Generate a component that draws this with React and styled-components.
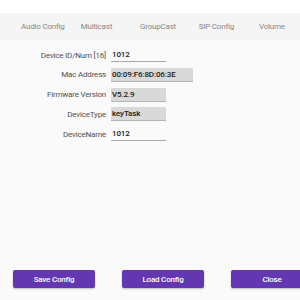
import React from "react";
import styled, { createGlobalStyle } from "styled-components";

const Global = createGlobalStyle`
  html, body { margin: 0; padding: 0; background: #fafafa; overflow: hidden; }
  body { font-family: Roboto, "Liberation Sans", sans-serif; }
`;

const Page = styled.div`
  width: 330px;
  height: 300px;
  display: flex;
  flex-direction: column;
  background: #fafafa;
`;

const TopSpace = styled.div`
  height: 13px;
  background: #ffffff;
`;

const TabBar = styled.div`
  height: 27px;
  background: #f5f5f5;
  display: flex;
  align-items: center;
  padding-left: 21px;
`;

const Tab = styled.div`
  font-size: 8px;
  letter-spacing: -0.2px;
  color: #878787;
  width: ${(p) => p.$w}px;
  white-space: nowrap;
`;

const Form = styled.div`
  display: flex;
  flex-direction: column;
  padding-top: 8px;
  gap: 5.75px;
`;

const Row = styled.div`
  display: grid;
  grid-template-columns: 111px auto;
  align-items: center;
  height: 14px;
`;

const Label = styled.div`
  font-size: 8px;
  letter-spacing: -0.2px;
  color: #505050;
  text-align: right;
  padding-right: 5px;
  white-space: nowrap;
`;

const Field = styled.div`
  width: ${(p) => p.$w}px;
  height: 14px;
  box-sizing: border-box;
  font-size: 8px;
  letter-spacing: -0.12px;
  color: #1a1a1a;
  font-weight: 500;
  padding-left: 1px;
  display: flex;
  align-items: center;
  background: ${(p) => (p.$filled ? "#d9d9d9" : "transparent")};
  border-bottom: 1px solid ${(p) => (p.$filled ? "#b5b5b5" : "#a8a8a8")};
  white-space: nowrap;
`;

const Spacer = styled.div`
  flex: 1;
`;

const ButtonBar = styled.div`
  display: flex;
  gap: 27px;
  padding-left: 13px;
  margin-bottom: 12px;
`;

const Button = styled.button`
  width: 82px;
  height: 18px;
  border: none;
  border-radius: 2px;
  background: #6337b2;
  color: #fff;
  font-family: Roboto, "Liberation Sans", sans-serif;
  font-size: 8px;
  letter-spacing: -0.2px;
  font-weight: 500;
  padding: 0;
  box-shadow: 0 1px 2px rgba(0,0,0,0.25);
`;

export default function App() {
  const tabs = [
    ["Audio Config", 59.7],
    ["Multicast", 59.3],
    ["GroupCast", 58.7],
    ["SIP Config", 60.3],
    ["Volume", 40],
  ];
  const rows = [
    ["Device ID/Num [16]", "1012", 55, false],
    ["Mac Address", "00:09:F6:8D:06:3E", 82, true],
    ["Firmware Version", "V5.2.9", 55, true],
    ["DeviceType", "keyTask", 55, true],
    ["DeviceName", "1012", 55, false],
  ];
  return (
    <>
      <Global />
      <Page>
        <TopSpace />
        <TabBar>
          {tabs.map(([t, w]) => (
            <Tab key={t} $w={w}>{t}</Tab>
          ))}
        </TabBar>
        <Form>
          {rows.map(([l, v, w, f]) => (
            <Row key={l}>
              <Label>{l}</Label>
              <Field $w={w} $filled={f}>{v}</Field>
            </Row>
          ))}
        </Form>
        <Spacer />
        <ButtonBar>
          <Button>Save Config</Button>
          <Button>Load Config</Button>
          <Button>Close</Button>
        </ButtonBar>
      </Page>
    </>
  );
}
